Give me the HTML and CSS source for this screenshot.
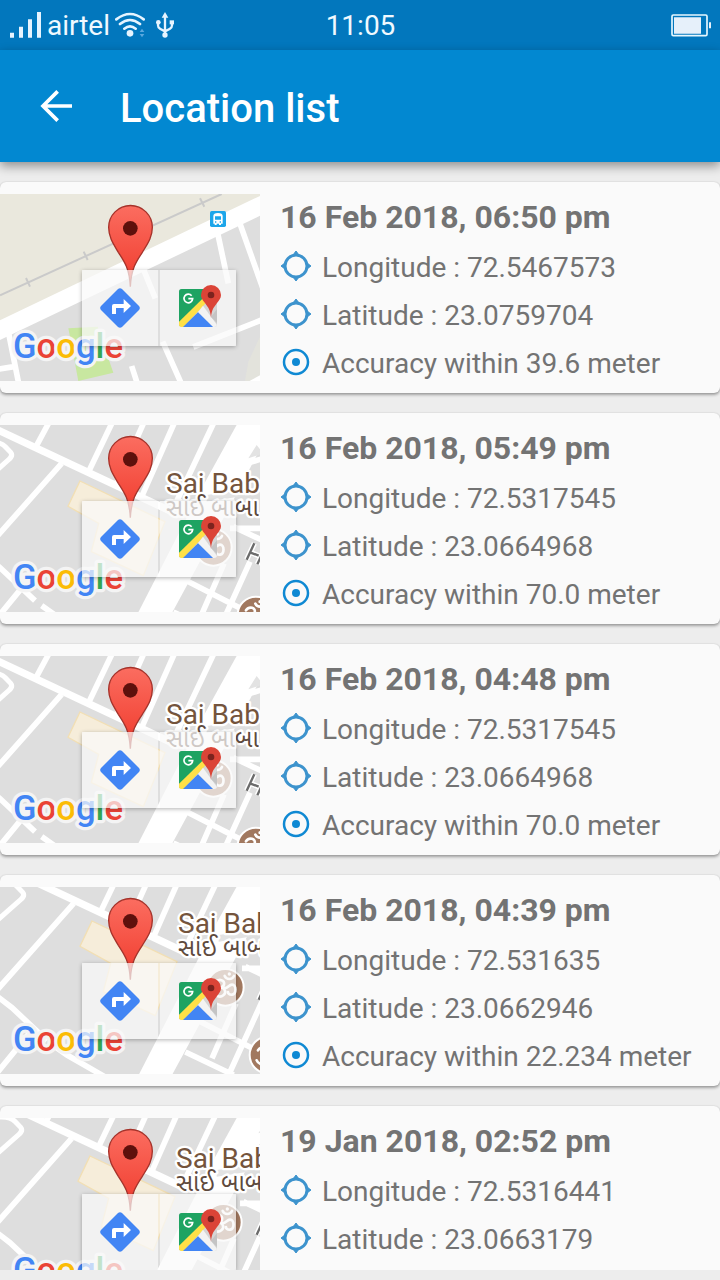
FILE: index.html
```html
<!DOCTYPE html>
<html lang="en">
<head>
<meta charset="utf-8">
<meta name="viewport" content="width=device-width, initial-scale=1">
<title>Location list</title>
<link rel="stylesheet" href="styles.css">
</head>
<body>
<svg class="sprite" aria-hidden="true">
  <defs>
    <linearGradient id="pin-fill" x1="0" y1="0" x2="0" y2="1">
      <stop offset="0" stop-color="#fb6d60"/>
      <stop offset="1" stop-color="#f03a2c"/>
    </linearGradient>
    <g id="pin">
      <path d="M391 278C388 225 375 205 355 175C340 150 326 130 326 100A65.500 65.500 0 0 1 457 100C457 130 442 150 427 175C407 205 394 225 391 278Z" fill="url(#pin-fill)" stroke="#a5322a" stroke-width="4"/>
      <circle cx="391" cy="103" r="22" fill="#5e100c"/>
    </g>
    <g id="google">
      <text class="logo" x="39" y="491"><tspan fill="#4285f4">G</tspan><tspan fill="#ea4335">o</tspan><tspan fill="#fbbc05">o</tspan><tspan fill="#4285f4">g</tspan><tspan fill="#34a853">l</tspan><tspan fill="#ea4335">e</tspan></text>
    </g>
    <g id="temple">
      <circle r="55" fill="#a1785f" stroke="#fff" stroke-width="6"/>
      <g fill="none" stroke="#fff" stroke-width="8" stroke-linecap="round">
        <path d="M-30-14C-20-28 0-22-4-8C-6 0-14 0-16 0C0 0 4 16-6 24C-16 32-30 26-34 16M-4 2C6 6 10-8 20-8C34-8 34 20 20 22C12 23 8 18 8 14M-2-34C4-22 20-22 26-34"/>
      </g>
      <circle cx="12" cy="-40" r="5" fill="#fff"/>
    </g>
    <g id="town">
      <g fill="none" stroke="#fff" stroke-width="17">
        <path d="M-60 50L520 322" stroke-width="22"/>
        <path d="M145 56L108 125M335 56L265 202M430 56L350 235M522 56L425 275M640 56L520 310"/>
        <path d="M-40 112Q0 108 16 125L32 142Q40 152 26 164L-60 240" stroke-width="15"/>
        <path d="M185 175L-60 452M-60 442L0 488L105 587M125 602L165 630L290 702M66 548L-50 690"/>
        <path d="M790 160L710 185M690 370H800M700 365L800 412M520 621L665 690M600 640L672 475M650 690L750 470M500 600L545 520L800 650"/>
      </g>
      <path d="M712 56H820L700 285L480 690H380L615 232Z" fill="#fff"/>
      <path d="M770 120L745 160L790 145ZM620 270L800 245V262L620 290Z" fill="#e3e3e3"/>
      <path d="M240 228L495 350L430 512L274 440L296 355L204 304Z" fill="#f6edda" stroke="#f2dfb4" stroke-width="4"/>
      <use href="#temple" x="640" y="427"/>
      <use href="#temple" x="768" y="630"/>
      <path d="M763 415L740 464M750 442L776 452M795 428L772 478" fill="none" stroke="#fff" stroke-width="16"/>
      <path d="M763 415L740 464M750 442L776 452M795 428L772 478" fill="none" stroke="#6b6b6b" stroke-width="7"/>
      <text class="place" x="498" y="263">Sai Baba</text>
      <text class="place place-local" x="498" y="333">સાંઈ બાબા</text>
    </g>
    <symbol id="directions" viewBox="0 0 120 120">
      <path d="M54 3Q60-2 66 3L117 54Q122 60 117 66L66 117Q60 122 54 117L3 66Q-2 60 3 54Z" fill="#4285f4"/>
      <path d="M36 78V54Q36 48 42 48H71V33L93 54L71 75V60H48V78Z" fill="#fff"/>
    </symbol>
    <g id="maps">
      <path d="M8 0H106Q114 0 114 8V106Q114 114 106 114H8Q0 114 0 106V8Q0 0 8 0Z" fill="#d5d5d5"/>
      <path d="M8 0H84V30L4 111Q0 110 0 106V8Q0 0 8 0Z" fill="#1ea362"/>
      <path d="M0 98L72 28L84 38L14 114H8Q0 114 0 106Z" fill="#ffe047"/>
      <path d="M57 70L72 50L114 108Q113 114 106 114H101Z" fill="#f3f3f3"/>
      <path d="M57 70L102 114H12Z" fill="#4285f4"/>
      <path d="M96 84L114 60V102Z" fill="#c4c4c4"/>
      <path d="M38 20A13 13 0 1 0 41 29H28" fill="none" stroke="#fff" stroke-width="5"/>
      <path d="M96 86C94 62 88 56 78 42C71 33 66 28 66 18A30 30 0 0 1 126 18C126 28 121 33 114 42C104 56 98 62 96 86Z" fill="#db4437"/>
      <circle cx="96" cy="18" r="10" fill="#7b231e"/>
    </g>
    <symbol id="crosshair" viewBox="0 0 30 30">
      <circle cx="15" cy="15" r="11" fill="none" stroke="#3d93cd" stroke-width="3"/>
      <path d="M15 0L18 4H12ZM15 30L18 26H12ZM0 15L4 12V18ZM30 15L26 12V18Z" fill="#3d93cd" stroke="#3d93cd" stroke-width="1"/>
    </symbol>
    <symbol id="target" viewBox="0 0 30 30">
      <circle cx="15" cy="15" r="12" fill="none" stroke="#0f89d3" stroke-width="2.500"/>
      <circle cx="15" cy="15" r="4" fill="#0f89d3"/>
    </symbol>
  </defs>
</svg>

<div class="status">
  <div class="status-left">
    <svg width="32" height="26" viewBox="0 0 96 78" fill="#e6f4ff" aria-hidden="true"><path d="M0 62H12V77H0ZM27 44H39V77H27ZM54 22H66V77H54ZM81 0H93V77H81Z"/></svg>
    <span class="carrier">airtel</span>
    <svg class="wifi" width="30" height="26" viewBox="0 0 90 78" fill="none" stroke="#e6f4ff" stroke-width="8" stroke-linecap="round" aria-hidden="true"><path d="M4 22Q45-10 86 22M15 36Q45 12 75 36M28 50Q45 36 62 50"/><circle cx="45" cy="64" r="10" fill="#e6f4ff" stroke="none"/><path d="M74 60L81 50L88 60ZM74 66L81 76L88 66Z" fill="#5ba8de" stroke="none"/></svg>
    <svg width="18" height="26" viewBox="0 0 54 78" fill="none" stroke="#e6f4ff" stroke-width="7" aria-hidden="true"><path d="M27 14V70M6 34V40Q6 47 12 50L27 58L42 50Q48 47 48 40V34"/><g fill="#e6f4ff" stroke="none"><path d="M27 0L37 17H17Z"/><circle cx="27" cy="69" r="8"/><circle cx="7" cy="31" r="7"/><path d="M41 25H54V37H41Z"/></g></svg>
  </div>
  <time class="clock">11:05</time>
  <svg class="battery" width="40" height="23" viewBox="0 0 120 69" aria-label="Battery" role="img"><rect x="3" y="3" width="105" height="62" rx="4" fill="none" stroke="#e6f8ff" stroke-width="5"/><path d="M9 10H90V59H9ZM114 25H120V43H114Z" fill="#e6f0fa"/></svg>
</div>

<header class="bar">
  <button class="back" type="button" aria-label="Back"><svg width="32" height="32" viewBox="0 0 96 96" fill="none" stroke="#fff" stroke-width="11"><path d="M96 48H10M53 4L9 48L53 92"/></svg></button>
  <h1 class="title">Location list</h1>
</header>

<main class="list">
  <article class="card">
    <div class="map">
      <svg class="map-image" viewBox="0 0 780 561" role="img" aria-label="Map">
        <g transform="translate(0 -72)">
          <path d="M0 72H780V95L0 470Z" fill="#eae8dd"/>
          <path d="M735 633L745 575L780 500V633Z" fill="#e3e3dc"/>
          <path d="M205 475L293 470L340 608L235 633Z" fill="#c8e7a0"/>
          <g fill="none" stroke="#fff" stroke-width="17">
            <path d="M-20 490L800 98" stroke-width="54"/>
            <path d="M652 185L685 340M716 150L792 365M425 285L466 385M488 515L548 650M395 588L415 650M580 531L790 448M26 490L58 650M-10 598L42 590M735 650L790 620"/>
          </g>
          <path d="M0 376L665 72M78 324L90 350M251 245L263 270M600 85L613 110" fill="none" stroke="#cacaca" stroke-width="6"/>
          <rect x="630" y="123" width="48" height="48" rx="5" fill="#1da6ea"/>
          <path d="M640 161V138Q640 129 654 129Q668 129 668 138V161H663V165H657V161H650V165H644V161Z" fill="#fff"/>
          <path d="M645 139H663V149H645ZM645 154H649V158H645ZM659 154H663V158H659Z" fill="#1da6ea"/>
        </g>
        <use href="#google"/><use href="#pin"/>
      </svg>
      <div class="tools">
        <button class="tool" type="button" aria-label="Directions"><svg width="40" height="40"><use href="#directions"/></svg></button>
        <button class="tool" type="button" aria-label="Open in Google Maps"><svg class="maps-icon" width="38" height="38" viewBox="0 0 114 114"><use href="#maps"/></svg></button>
      </div>
    </div>
    <div class="info">
      <h2 class="date">16 Feb 2018, 06:50 pm</h2>
      <p class="row"><svg class="mark" aria-hidden="true"><use href="#crosshair"/></svg>Longitude : 72.5467573</p>
      <p class="row"><svg class="mark" aria-hidden="true"><use href="#crosshair"/></svg>Latitude : 23.0759704</p>
      <p class="row"><svg class="mark" aria-hidden="true"><use href="#target"/></svg>Accuracy within 39.6 meter</p>
    </div>
  </article>

  <article class="card">
    <div class="map">
      <svg class="map-image" viewBox="0 0 780 561" role="img" aria-label="Map">
        <use href="#town" y="-60"/><use href="#google"/><use href="#pin"/>
      </svg>
      <div class="tools">
        <button class="tool" type="button" aria-label="Directions"><svg width="40" height="40"><use href="#directions"/></svg></button>
        <button class="tool" type="button" aria-label="Open in Google Maps"><svg class="maps-icon" width="38" height="38" viewBox="0 0 114 114"><use href="#maps"/></svg></button>
      </div>
    </div>
    <div class="info">
      <h2 class="date">16 Feb 2018, 05:49 pm</h2>
      <p class="row"><svg class="mark" aria-hidden="true"><use href="#crosshair"/></svg>Longitude : 72.5317545</p>
      <p class="row"><svg class="mark" aria-hidden="true"><use href="#crosshair"/></svg>Latitude : 23.0664968</p>
      <p class="row"><svg class="mark" aria-hidden="true"><use href="#target"/></svg>Accuracy within 70.0 meter</p>
    </div>
  </article>

  <article class="card">
    <div class="map">
      <svg class="map-image" viewBox="0 0 780 561" role="img" aria-label="Map">
        <use href="#town" y="-60"/><use href="#google"/><use href="#pin"/>
      </svg>
      <div class="tools">
        <button class="tool" type="button" aria-label="Directions"><svg width="40" height="40"><use href="#directions"/></svg></button>
        <button class="tool" type="button" aria-label="Open in Google Maps"><svg class="maps-icon" width="38" height="38" viewBox="0 0 114 114"><use href="#maps"/></svg></button>
      </div>
    </div>
    <div class="info">
      <h2 class="date">16 Feb 2018, 04:48 pm</h2>
      <p class="row"><svg class="mark" aria-hidden="true"><use href="#crosshair"/></svg>Longitude : 72.5317545</p>
      <p class="row"><svg class="mark" aria-hidden="true"><use href="#crosshair"/></svg>Latitude : 23.0664968</p>
      <p class="row"><svg class="mark" aria-hidden="true"><use href="#target"/></svg>Accuracy within 70.0 meter</p>
    </div>
  </article>

  <article class="card">
    <div class="map">
      <svg class="map-image" viewBox="0 0 780 561" role="img" aria-label="Map">
        <use href="#town" x="36" y="-126"/><use href="#google"/><use href="#pin"/>
      </svg>
      <div class="tools">
        <button class="tool" type="button" aria-label="Directions"><svg width="40" height="40"><use href="#directions"/></svg></button>
        <button class="tool" type="button" aria-label="Open in Google Maps"><svg class="maps-icon" width="38" height="38" viewBox="0 0 114 114"><use href="#maps"/></svg></button>
      </div>
    </div>
    <div class="info">
      <h2 class="date">16 Feb 2018, 04:39 pm</h2>
      <p class="row"><svg class="mark" aria-hidden="true"><use href="#crosshair"/></svg>Longitude : 72.531635</p>
      <p class="row"><svg class="mark" aria-hidden="true"><use href="#crosshair"/></svg>Latitude : 23.0662946</p>
      <p class="row"><svg class="mark" aria-hidden="true"><use href="#target"/></svg>Accuracy within 22.234 meter</p>
    </div>
  </article>

  <article class="card">
    <div class="map">
      <svg class="map-image" viewBox="0 0 780 561" role="img" aria-label="Map">
        <use href="#town" x="30" y="-114"/><use href="#google"/><use href="#pin"/>
      </svg>
      <div class="tools">
        <button class="tool" type="button" aria-label="Directions"><svg width="40" height="40"><use href="#directions"/></svg></button>
        <button class="tool" type="button" aria-label="Open in Google Maps"><svg class="maps-icon" width="38" height="38" viewBox="0 0 114 114"><use href="#maps"/></svg></button>
      </div>
    </div>
    <div class="info">
      <h2 class="date">19 Jan 2018, 02:52 pm</h2>
      <p class="row"><svg class="mark" aria-hidden="true"><use href="#crosshair"/></svg>Longitude : 72.5316441</p>
      <p class="row"><svg class="mark" aria-hidden="true"><use href="#crosshair"/></svg>Latitude : 23.0663179</p>
    </div>
  </article>
</main>
</body>
</html>
```

FILE: styles.css
```css
* {
  box-sizing: border-box;
}

body {
  margin: 0;
  height: 100vh;
  padding-bottom: 10px;
  display: flex;
  flex-direction: column;
  background: #ededed;
  color: #737373;
  font-family: Roboto, "Noto Sans", sans-serif;
  font-size: 28px;
}

h1,
h2,
p {
  margin: 0;
}

button {
  border: 0;
  padding: 0;
  background: none;
  font: inherit;
  cursor: pointer;
}

.sprite {
  position: absolute;
  width: 0;
  height: 0;
}

.status {
  display: grid;
  grid-template-columns: 1fr auto 1fr;
  align-items: center;
  flex: none;
  height: 50px;
  padding: 0 9px 0 10px;
  background: #0277bd;
  color: #f0f9ff;
}

.status-left {
  display: flex;
  align-items: center;
  gap: 5px;
}

.carrier,
.clock {
  padding-top: 2px;
  line-height: 48px;
}

.wifi {
  margin-right: 6px;
}

.battery {
  justify-self: end;
}

.bar {
  position: relative;
  z-index: 1;
  display: flex;
  align-items: center;
  gap: 48px;
  flex: none;
  height: 112px;
  padding-left: 40px;
  background: #0288d1;
  box-shadow: 0 4px 10px rgba(0, 0, 0, 0.4);
}

.back {
  display: flex;
}

.title {
  padding-top: 4px;
  color: #fff;
  font-size: 40px;
  font-weight: 500;
}

.list {
  flex: 1;
  min-height: 0;
  padding-top: 20px;
  display: flex;
  flex-direction: column;
  gap: 20px;
  overflow-y: auto;
  scrollbar-width: none;
}

.card {
  display: flex;
  flex: none;
  align-items: flex-start;
  gap: 20px;
  padding-top: 12px;
  border-radius: 6px;
  background: #fafafa;
  box-shadow: 0 2px 3px rgba(0, 0, 0, 0.32), 0 0 2px rgba(0, 0, 0, 0.14);
}

.map {
  position: relative;
  flex: none;
  margin-bottom: 12px;
}

.map-image {
  display: block;
  width: 260px;
  height: 187px;
  background: #dedede;
}

.logo {
  font-family: Roboto, sans-serif;
  font-size: 104px;
  font-weight: 500;
  paint-order: stroke;
  stroke: #f4f4f4;
  stroke-width: 20px;
  stroke-linejoin: round;
}

.place {
  font-family: Roboto, sans-serif;
  font-size: 84px;
  fill: #74543c;
  paint-order: stroke;
  stroke: #fff;
  stroke-width: 14px;
  stroke-linejoin: round;
}

.place-local {
  font-family: "Noto Sans Gujarati", "Noto Sans", sans-serif;
  font-size: 72px;
  fill: #5e4a3d;
}

.tools {
  position: absolute;
  right: 24px;
  bottom: 35px;
  display: flex;
  gap: 2px;
  border-radius: 2px;
  box-shadow: 0 1px 4px rgba(0, 0, 0, 0.3);
}

.tool {
  display: flex;
  align-items: center;
  justify-content: center;
  width: 76px;
  height: 76px;
  background: rgba(250, 250, 250, 0.72);
}

.maps-icon {
  overflow: visible;
}

.info {
  flex: 1;
  min-width: 0;
  padding-bottom: 5px;
}

.date {
  margin-bottom: 4px;
  font-size: 32px;
  font-weight: 700;
  line-height: 46px;
}

.row {
  display: flex;
  align-items: center;
  gap: 11px;
  padding-left: 1px;
  line-height: 48px;
}

.mark {
  flex: none;
  width: 30px;
  height: 30px;
  margin-bottom: 4px;
}
```
